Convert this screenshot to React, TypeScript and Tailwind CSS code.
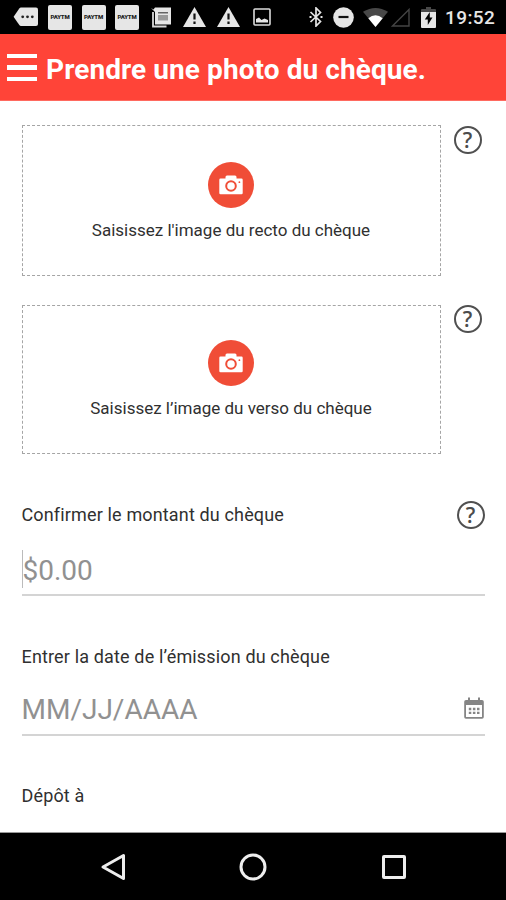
import { useState } from 'react'

type CaptureBoxProps = {
    label: string
    boxClass: string
    helpClass: string
}

function PaytmIcon() {
    return (
        <div className="w-[24px] h-[25px] rounded-[2px] bg-[#e6e6e6] text-[#222] text-[6px] font-black leading-[23px] text-center tracking-[-0.2px]">
            PAYTM
        </div>
    )
}

function WarningIcon() {
    return (
        <svg className="w-[23px] h-[20px]" viewBox="0 0 23 20">
            <path d="M11.5 0 L23 20 H0 Z" fill="#e6e6e6" />
            <path d="M11.5 6.5 V12.5 M11.5 14.5 V17" stroke="#111" strokeWidth="2.2" />
        </svg>
    )
}

function StatusBar() {
    return (
        <div className="flex items-center h-[34px] bg-black pl-[13px] text-white">
            <svg className="w-[25px] h-[20px]" viewBox="0 0 25 20">
                <path d="M8 0.5 H23 Q25 0.5 25 2.5 V17 Q25 19 23 19 H8 Q7 19 6.3 18 L0.6 9.8 L6.3 1.5 Q7 0.5 8 0.5 Z" fill="#e6e6e6" />
                <g fill="#222">
                    <circle cx="9.7" cy="9.8" r="1.4" />
                    <circle cx="14.5" cy="9.8" r="1.4" />
                    <circle cx="19.3" cy="9.8" r="1.4" />
                </g>
            </svg>
            <div className="flex gap-[9.5px] ml-[10px]">
                <PaytmIcon />
                <PaytmIcon />
                <PaytmIcon />
            </div>
            <svg className="w-[20px] h-[21px] ml-[12px]" viewBox="0 0 20 21">
                <path d="M0 1 L2.5 2.5 L4 0.5 H20 V17.5 H4 V5 L0 1 Z" fill="#e6e6e6" />
                <path d="M2 5 V19.5 H15.5" fill="none" stroke="#d8d8d8" strokeWidth="1.8" />
                <path d="M7 5.8 H17" stroke="#444" strokeWidth="1.2" />
                <path d="M7 8 H17 V13.5 H7 Z" fill="#9a9a9a" />
            </svg>
            <div className="flex gap-[11px] ml-[12px]">
                <WarningIcon />
                <WarningIcon />
            </div>
            <svg className="w-[18px] h-[18px] ml-[13px]" viewBox="0 0 18 18">
                <rect x="1" y="1" width="16" height="16" rx="1" fill="none" stroke="#ddd" strokeWidth="1.6" />
                <path d="M3 14.5 V11 L6 9.5 L8.5 12 L11.5 10.5 L15 12 V14.5 Z" fill="#e6e6e6" />
            </svg>
            <svg className="w-[14px] h-[20px] ml-[38px]" viewBox="0 0 14 20">
                <path d="M1.5 5 L11.5 14.5 L7 19 V1 L11.5 5.5 L1.5 15" fill="none" stroke="#e6e6e6" strokeWidth="1.7" />
                <path d="M0.5 10 H2.5 M11.5 10 H13.5" stroke="#e6e6e6" strokeWidth="1.8" />
            </svg>
            <svg className="w-[21px] h-[21px] ml-[10px]" viewBox="0 0 21 21">
                <circle cx="10.5" cy="10.5" r="10.3" fill="#e6e6e6" />
                <path d="M5.5 10 H15.5" stroke="#111" strokeWidth="2.2" />
            </svg>
            <svg className="w-[25px] h-[19px] ml-[9px]" viewBox="0 0 25 19">
                <path d="M0 3.8 Q12.5 -3.8 25 3.8 L12.5 19 Z" fill="#484848" />
                <path d="M5.3 10.2 Q12.5 4.4 19.7 10.2 L12.5 19 Z" fill="#fff" />
            </svg>
            <svg className="w-[19px] h-[19px] ml-[3px]" viewBox="0 0 19 19">
                <path d="M18 1.5 V18 H1.5 Z" fill="none" stroke="#444" strokeWidth="1.4" />
            </svg>
            <svg className="w-[15px] h-[21px] ml-[11px]" viewBox="0 0 15 21">
                <path d="M5 0 H10 V2 H14 Q15 2 15 3 V6 H0 V3 Q0 2 1 2 H5 Z" fill="#484848" />
                <path d="M0 5 H15 V20 Q15 21 14 21 H1 Q0 21 0 20 Z" fill="#e6e6e6" />
                <path d="M8.8 5 L3.8 12.6 H6.8 V18 L11.5 10.6 H8.8 Z" fill="#000" />
            </svg>
            <span className="ml-[9px] mt-px text-[19px] font-medium text-[#e6e6e6] leading-none tracking-[0.4px] whitespace-nowrap">19:52</span>
        </div>
    )
}

function Header() {
    return (
        <header className="flex items-center h-[67px] bg-[#ff4438] pl-[7px] border-b border-[#ff6a60]">
            <button className="flex flex-col gap-[7px] w-[30px] mt-px" aria-label="Menu">
                <span className="h-[4.5px] w-full bg-white" />
                <span className="h-[4.5px] w-full bg-white" />
                <span className="h-[4.5px] w-full bg-white" />
            </button>
            <h1 className="ml-[9px] mt-[6px] text-[28px] font-bold text-white leading-none tracking-[0.08px] whitespace-nowrap">Prendre une photo du chèque.</h1>
        </header>
    )
}

function HelpIcon() {
    return (
        <div className="flex items-center justify-center w-[28px] h-[28px] rounded-full border-2 border-[#505050] text-[#4c4c4c] font-['Open_Sans',sans-serif] text-[21px] font-semibold leading-none shrink-0">
            ?
        </div>
    )
}

function CameraIcon() {
    return (
        <div className="flex items-center justify-center w-[46px] h-[46px] rounded-full bg-[#f04d37]">
            <svg className="w-[24px] h-[20px]" viewBox="0 0 24 20">
                <path d="M1.5 3.5 H6.5 V2 Q6.5 0.5 8 0.5 H16 Q17.5 0.5 17.5 2 V3.5 H22.5 Q23.7 3.5 23.7 4.7 V18 Q23.7 19.3 22.5 19.3 H1.5 Q0.3 19.3 0.3 18 V4.7 Q0.3 3.5 1.5 3.5 Z" fill="#fff" />
                <circle cx="12" cy="11" r="4.8" fill="none" stroke="#f04d37" strokeWidth="2" />
                <circle cx="20.4" cy="7.2" r="0.9" fill="#f04d37" />
            </svg>
        </div>
    )
}

function CaptureBox({ label, boxClass, helpClass }: CaptureBoxProps) {
    return (
        <div className="flex gap-[13px]">
            <button className={`flex flex-col items-center w-[419px] border border-dashed border-[#a5a5a5] ${boxClass}`}>
                <CameraIcon />
                <span className="mt-[12px] text-[17px] leading-[20px] text-[#303030] whitespace-nowrap">{label}</span>
            </button>
            <div className={helpClass}>
                <HelpIcon />
            </div>
        </div>
    )
}

function CalendarIcon() {
    return (
        <svg className="w-[20px] h-[22px]" viewBox="0 0 20 22">
            <path d="M2 3 H18 Q19.8 3 19.8 4.8 V20 Q19.8 21.8 18 21.8 H2 Q0.2 21.8 0.2 20 V4.8 Q0.2 3 2 3 Z M2 8 V20 H18 V8 Z" fill="#858585" fillRule="evenodd" />
            <path d="M5 0.5 V4 M15 0.5 V4" stroke="#858585" strokeWidth="2" />
            <path d="M4.8 12 H15.5 M4.8 15.8 H15.5" stroke="#858585" strokeWidth="2.3" strokeDasharray="2.5 1.6" />
        </svg>
    )
}

function NavBar() {
    return (
        <nav className="flex items-center h-[68px] bg-black border-t border-[#999] pl-[100px]">
            <svg className="w-[26px] h-[28px]" viewBox="0 0 26 28">
                <path d="M23.5 2.5 V25.5 L3 14 Z" fill="none" stroke="#eee" strokeWidth="3" strokeLinejoin="round" />
            </svg>
            <svg className="w-[28px] h-[28px] ml-[113px]" viewBox="0 0 28 28">
                <circle cx="14" cy="14" r="12" fill="none" stroke="#eee" strokeWidth="3" />
            </svg>
            <svg className="w-[26px] h-[26px] ml-[114px]" viewBox="0 0 26 26">
                <rect x="2.5" y="2.5" width="21" height="21" rx="0.5" fill="none" stroke="#eee" strokeWidth="3" />
            </svg>
        </nav>
    )
}

export default function App() {
    const [amount, setAmount] = useState('')
    const [date, setDate] = useState('')

    return (
        <div className="flex flex-col w-[506px] h-[900px] bg-white overflow-hidden font-[Roboto,sans-serif]">
            <StatusBar />
            <Header />
            <main className="flex-1 px-[21.5px] pt-[24px]">
                <CaptureBox label="Saisissez l'image du recto du chèque" boxClass="h-[151px] pt-[36px]" helpClass="pt-px" />
                <div className="h-[29px]" />
                <CaptureBox label="Saisissez l’image du verso du chèque" boxClass="h-[149px] pt-[34px]" helpClass="pt-0" />

                <div className="flex items-center justify-between mt-[47px] h-[28px]">
                    <label htmlFor="amount" className="text-[18px] leading-[20px] tracking-[0.15px] text-[#303030] whitespace-nowrap">Confirmer le montant du chèque</label>
                    <HelpIcon />
                </div>
                <div className="flex items-center mt-[20px] h-[47px] border-b-2 border-[#d4d4d4] pb-[5px]">
                    <span className="w-px h-[38px] bg-[#bbb]" />
                    <input
                        id="amount"
                        className="w-full pt-[4px] text-[28px] text-[#777] placeholder:text-[#919191] outline-none"
                        placeholder="$0.00"
                        value={amount}
                        onChange={(e) => setAmount(e.target.value)}
                    />
                </div>

                <label htmlFor="date" className="block mt-[51px] text-[18px] leading-[20px] tracking-[0.15px] text-[#303030] whitespace-nowrap">Entrer la date de l’émission du chèque</label>
                <div className="flex items-center mt-[18px] h-[51px] border-b-2 border-[#d4d4d4] pr-px">
                    <input
                        id="date"
                        className="flex-1 pt-px text-[28px] text-[#777] placeholder:text-[#919191] outline-none"
                        placeholder="MM/JJ/AAAA"
                        value={date}
                        onChange={(e) => setDate(e.target.value)}
                    />
                    <div className="pb-[4px]">
                        <CalendarIcon />
                    </div>
                </div>

                <p className="mt-[50px] text-[18px] leading-[20px] tracking-[0.16px] text-[#303030]">Dépôt à</p>
            </main>
            <NavBar />
        </div>
    )
}
